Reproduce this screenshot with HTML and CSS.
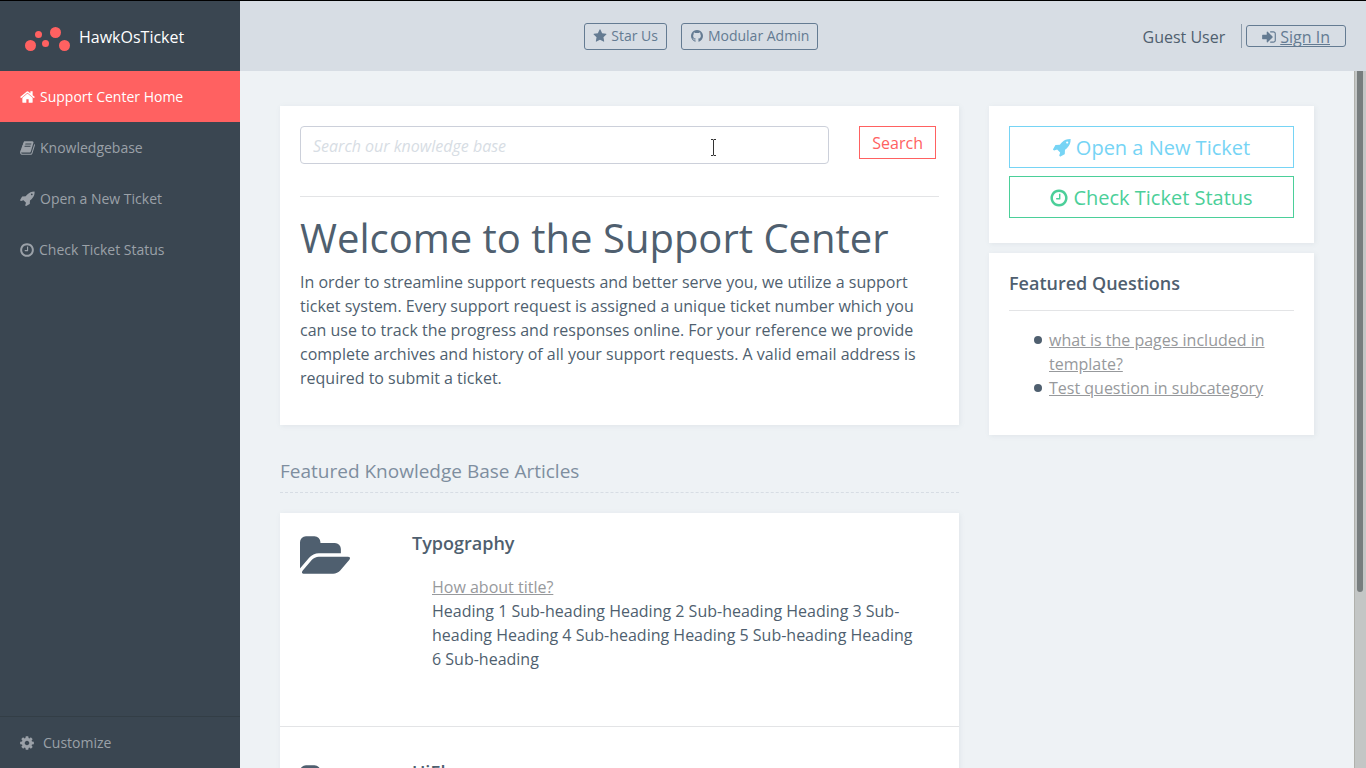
FILE: index.html
```html
<!DOCTYPE html>
<html lang="en">
<head>
<meta charset="utf-8">
<title>HawkOsTicket</title>
<meta name="viewport" content="width=device-width, initial-scale=1">
<link rel="stylesheet" href="styles.css">
</head>
<body>
<svg class="sprite" aria-hidden="true">
  <symbol id="home" viewBox="64 0 1664 1792"><path d="M1472 992v480q0 26-19 45t-45 19h-384v-384h-256v384h-384q-26 0-45-19t-19-45v-480q0-1 .5-3t.5-3l575-474 575 474q1 2 1 6zm223-69l-62 74q-8 9-21 11h-3q-13 0-21-7l-692-577-692 577q-12 8-24 7-13-2-21-11l-62-74q-8-10-7-23.5t11-21.5l719-599q32-26 76-26t76 26l244 204v-195q0-14 9-23t23-9h192q14 0 23 9t9 23v408l219 182q10 8 11 21.5t-7 23.5z"/></symbol>
  <symbol id="book" viewBox="64 0 1664 1792"><path d="M1703 478q40 57 18 129l-275 906q-19 64-76.5 107.5t-122.5 43.5h-923q-77 0-148.5-53.5t-99.5-131.5q-24-67-2-127 0-4 3-27t4-37q1-8-3-21.5t-3-19.5q2-11 8-21t16.5-23.5 16.5-23.5q23-38 45-91.5t30-91.5q3-10 .5-30t-.5-28q3-11 17-28t17-23q21-36 42-92t25-90q1-9-2.5-32t.5-28q4-13 22-30.5t22-22.5q19-26 42.5-84.5t27.5-96.5q1-8-3-25.5t-2-26.5q2-8 9-18t18-23 17-21q8-12 16.5-30.5t15-35 16-36 19.5-32 26.5-23.5 36-11.5 47.5 5.5l-1 3q38-9 51-9h761q74 0 114 56t18 130l-274 906q-36 119-71.5 153.5t-128.5 34.5h-869q-27 0-38 15-11 16-1 43 24 70 144 70h923q29 0 56-15.5t35-41.5l300-987q7-22 5-57 38 15 59 43zm-1064 2q-4 13 2 22.5t20 9.5h608q13 0 25.5-9.5t16.5-22.5l21-64q4-13-2-22.5t-20-9.5h-608q-13 0-25.5 9.5t-16.5 22.5zm-83 256q-4 13 2 22.5t20 9.5h608q13 0 25.5-9.5t16.5-22.5l21-64q4-13-2-22.5t-20-9.5h-608q-13 0-25.5 9.5t-16.5 22.5z"/></symbol>
  <symbol id="rocket" viewBox="32 64 1664 1792"><path d="M1440 448q0-40-28-68t-68-28-68 28-28 68 28 68 68 28 68-28 28-68zm224-288q0 249-75.5 430.5t-253.5 360.5q-81 80-195 176l-20 379q-2 16-16 26l-384 224q-7 4-16 4-12 0-23-9l-64-64q-13-14-8-32l85-276-281-281-276 85q-3 1-9 1-14 0-23-9l-64-64q-17-19-5-39l224-384q10-14 26-16l379-20q96-114 176-195 188-187 358-258t431-71q14 0 24 9.5t10 22.5z"/></symbol>
  <symbol id="clock" viewBox="128 0 1536 1792"><path d="M1024 544v448q0 14-9 23t-23 9h-320q-14 0-23-9t-9-23v-64q0-14 9-23t23-9h224v-352q0-14 9-23t23-9h64q14 0 23 9t9 23zm416 352q0-148-73-273t-198-198-273-73-273 73-198 198-73 273 73 273 198 198 273 73 273-73 198-198 73-273zm224 0q0 209-103 385.5t-279.5 279.5-385.5 103-385.5-103-279.5-279.5-103-385.5 103-385.5 279.5-279.5 385.5-103 385.5 103 279.5 279.5 103 385.5z"/></symbol>
  <symbol id="cog" viewBox="128 0 1536 1792"><path d="M1152 896q0-106-75-181t-181-75-181 75-75 181 75 181 181 75 181-75 75-181zm512-109v222q0 12-8 23t-20 13l-185 28q-19 54-39 91 35 50 107 138 10 12 10 25t-9 23q-27 37-99 108t-94 71q-12 0-26-9l-138-108q-44 23-91 38-16 136-29 186-7 28-36 28h-222q-14 0-24.5-8.5t-11.5-21.5l-28-184q-49-16-90-37l-141 107q-10 9-25 9-14 0-25-11-126-114-165-168-7-10-7-23 0-12 8-23 15-21 51-66.5t54-70.5q-27-50-41-99l-183-27q-13-2-21-12.5t-8-23.5v-222q0-12 8-23t19-13l186-28q14-46 39-92-40-57-107-138-10-12-10-24 0-10 9-23 26-36 98.5-107.5t94.5-71.5q13 0 26 10l138 107q44-23 91-38 16-136 29-186 7-28 36-28h222q14 0 24.5 8.5t11.5 21.5l28 184q49 16 90 37l142-107q9-9 24-9 13 0 25 10 129 119 165 170 7 8 7 22 0 12-8 23-15 21-51 66.5t-54 70.5q26 50 41 98l183 28q13 2 21 12.5t8 23.5z"/></symbol>
  <symbol id="star" viewBox="64 0 1664 1792"><path d="M1728 647q0 22-26 48l-363 354 86 500q1 7 1 20 0 21-10.5 35.5t-30.5 14.5q-19 0-40-12l-449-236-449 236q-22 12-40 12-21 0-31.5-14.5t-10.5-35.5q0-6 2-20l86-500-364-354q-25-27-25-48 0-37 56-46l502-73 225-455q19-41 49-41t49 41l225 455 502 73q56 9 56 46z"/></symbol>
  <symbol id="github" viewBox="128 0 1536 1792"><path d="M896 128q209 0 385.5 103t279.5 279.5 103 385.5q0 251-146.5 451.5t-378.5 277.5q-27 5-40-7t-13-30q0-3 .5-76.5t.5-134.5q0-97-52-142 57-6 102.5-18t94-39 81-66.5 53-105 20.5-150.5q0-119-79-206 37-91-8-204-28-9-81 11t-92 44l-38 24q-93-26-192-26t-192 26q-16-11-42.5-27t-83.5-38.5-85-13.5q-45 113-8 204-79 87-79 206 0 85 20.5 150t52.5 105 80.5 67 94 39 102.5 18q-39 36-49 103-21 10-45 15t-57 5-65.5-21.5-55.5-62.5q-19-32-48.5-52t-49.5-24l-20-3q-21 0-29 4.5t-5 11.5 9 14 13 12l7 5q22 10 43.5 38t31.5 51l10 23q13 38 44 61.5t67 30 69.5 7 55.5-3.5l23-4q0 38 .5 88.5t.5 54.5q0 18-13 30t-40 7q-232-77-378.5-277.5t-146.5-451.5q0-209 103-385.5t279.5-279.5 385.5-103z"/></symbol>
  <symbol id="signin" viewBox="128 0 1536 1792"><path d="M1312 896q0 26-19 45l-544 544q-19 19-45 19t-45-19-19-45v-288h-448q-26 0-45-19t-19-45v-384q0-26 19-45t45-19h448v-288q0-26 19-45t45-19 45 19l544 544q19 19 19 45zm352-352v704q0 119-84.5 203.5t-203.5 84.5h-320q-13 0-22.5-9.5t-9.5-22.5q0-4-1-20t-.5-26.5 3-23.5 10-19.5 20.5-6.5h320q66 0 113-47t47-113v-704q0-66-47-113t-113-47h-312l-11.5-1-11.5-3-8-5.5-7-9-2-13.5q0-4-1-20t-.5-26.5 3-23.5 10-19.5 20.5-6.5h320q119 0 203.5 84.5t84.5 203.5z"/></symbol>
  <symbol id="folder" viewBox="-64 128 1879 1408"><path d="M1815 952q0 31-31 66l-336 396q-43 51-120.5 86.5t-143.5 35.5h-1088q-34 0-60.5-13t-26.5-43q0-31 31-66l336-396q43-51 120.5-86.5t143.5-35.5h1088q34 0 60.5 13t26.5 43zm-343-344v160h-832q-94 0-197 47.5t-164 119.5l-337 396-5 6q0-4-.5-12.5t-.5-12.5v-960q0-92 66-158t158-66h320q92 0 158 66t66 158v32h544q92 0 158 66t66 158z"/></symbol>
</svg>
<div class="app">
  <aside class="sidebar">
    <div class="brand">
      <svg class="logo" viewBox="0 -4 45 28" aria-hidden="true"><circle cx="5.500" cy="18.500" r="5.500"/><circle cx="13.500" cy="7.500" r="3.500"/><circle cx="20.500" cy="16.500" r="3.500"/><circle cx="30.500" cy="5.500" r="5.500"/><circle cx="39.500" cy="18.500" r="5.500"/></svg>
      <span>HawkOsTicket</span>
    </div>
    <nav class="menu">
      <a class="active" href="#"><svg class="icon"><use href="#home"/></svg>Support Center Home</a>
      <a href="#"><svg class="icon"><use href="#book"/></svg>Knowledgebase</a>
      <a href="#"><svg class="icon"><use href="#rocket"/></svg>Open a New Ticket</a>
      <a href="#"><svg class="icon narrow"><use href="#clock"/></svg>Check Ticket Status</a>
    </nav>
    <a class="customize" href="#"><svg class="icon narrow"><use href="#cog"/></svg>Customize</a>
  </aside>
  <div class="page">
    <header class="topbar">
      <div class="links">
        <a class="pill" href="#"><svg class="icon"><use href="#star"/></svg>Star Us</a>
        <a class="pill" href="#"><svg class="icon"><use href="#github"/></svg>Modular Admin</a>
      </div>
      <div class="user">
        <span class="guest">Guest User</span>
        <a class="signin" href="#"><svg class="icon"><use href="#signin"/></svg>Sign In</a>
      </div>
    </header>
    <div class="viewport">
      <main class="content">
        <div class="primary">
          <section class="card">
            <form class="search">
              <input type="text" placeholder="Search our knowledge base" aria-label="Search our knowledge base">
              <button type="button">Search</button>
              <svg class="cursor" viewBox="0 0 7 17" aria-hidden="true"><path d="M1 .5H3L3.500 1L4 .5H6M3.500 1V16M1 16.500H3L3.500 16L4 16.500H6"/></svg>
            </form>
            <hr>
            <h1>Welcome to the Support Center</h1>
            <p>In order to streamline support requests and better serve you, we utilize a support ticket system. Every support request is assigned a unique ticket number which you can use to track the progress and responses online. For your reference we provide complete archives and history of all your support requests. A valid email address is required to submit a ticket.</p>
          </section>
          <h2 class="section-title">Featured Knowledge Base Articles</h2>
          <section class="articles">
            <article class="article">
              <svg class="folder"><use href="#folder"/></svg>
              <div>
                <h3>Typography</h3>
                <div class="entry">
                  <a href="#">How about title?</a>
                  <p>Heading 1 Sub-heading Heading 2 Sub-heading Heading 3 Sub-heading Heading 4 Sub-heading Heading 5 Sub-heading Heading 6 Sub-heading</p>
                </div>
              </div>
            </article>
            <article class="article">
              <svg class="folder"><use href="#folder"/></svg>
              <div><h3>UiEl</h3></div>
            </article>
          </section>
        </div>
        <div class="secondary">
          <section class="card actions">
            <a class="open" href="#"><svg class="icon"><use href="#rocket"/></svg>Open a New Ticket</a>
            <a class="check" href="#"><svg class="icon"><use href="#clock"/></svg>Check Ticket Status</a>
          </section>
          <section class="card questions">
            <h3>Featured Questions</h3>
            <hr>
            <ul>
              <li><a href="#">what is the pages included in template?</a></li>
              <li><a href="#">Test question in subcategory</a></li>
            </ul>
          </section>
        </div>
      </main>
      <div class="scroll-track"><div class="scroll-thumb"></div></div>
    </div>
  </div>
</div>
</body>
</html>
```
FILE: styles.css
```css
* { box-sizing: border-box; }
body {
  margin: 0;
  font: 16px/24px "Open Sans", "Noto Sans", sans-serif;
  color: #4f5f6f;
  background: #eef2f5;
}
a { color: inherit; }
h1, h2, h3, p, ul { margin: 0; }
hr { border: 0; border-top: 1px solid #e3e4e6; margin: 0; }
.sprite { display: none; }
.icon { width: 1em; height: 1em; fill: currentColor; flex: none; }

.app { display: flex; height: 100vh; overflow: hidden; border-top: 1px solid #000; }

.sidebar {
  width: 240px;
  flex: none;
  display: flex;
  flex-direction: column;
  background: #3a4651;
  color: #9ba1a8;
  font-size: 14px;
}
.brand {
  height: 70px;
  padding: 2px 25px 0;
  display: flex;
  align-items: center;
  gap: 9px;
  color: #fff;
  font-size: 16px;
}
.logo { width: 45px; height: 28px; fill: #ff6161; }
.menu a, .customize {
  display: flex;
  align-items: center;
  height: 51px;
  padding: 0 20px;
  gap: 5px;
  text-decoration: none;
}
.sidebar .icon { width: 15px; height: 16px; }
.sidebar .narrow { width: 14px; }
.menu .active { background: #ff6161; color: #fff; }
.customize { margin-top: auto; height: 52px; gap: 9px; border-top: 1px solid #333e46; }

.page { flex: 1; min-width: 0; display: flex; flex-direction: column; }
.topbar {
  height: 70px;
  flex: none;
  padding: 0 20px 0 40px;
  display: flex;
  align-items: center;
  gap: 20px;
  background: #d7dde4;
}
.links { flex: 1; display: flex; justify-content: center; gap: 14px; }
.pill, .signin {
  display: flex;
  align-items: center;
  gap: 4px;
  color: #647b92;
  border: 1px solid #647b92;
  border-radius: 3px;
}
.pill { height: 27px; padding: 0 8px; font-size: 14px; text-decoration: none; }
.user { display: flex; align-items: center; gap: 4px; }
.guest { height: 24px; line-height: 26px; padding-right: 16px; border-right: 1px solid #8d9cab; }
.signin { height: 22px; padding: 2px 15px 0; }
.signin .icon { width: 14px; }

.viewport { flex: 1; min-height: 0; display: flex; overflow: hidden; }
.content {
  flex: 1;
  min-width: 0;
  padding: 35px 40px 0;
  display: grid;
  grid-template-columns: minmax(0, 679fr) minmax(0, 325fr);
  gap: 30px;
  align-items: start;
}
.card, .articles { background: #fff; box-shadow: 1px 1px 5px rgba(126, 142, 159, .12); }
.card { padding: 20px; }
.card > p { margin-bottom: 15px; }

.search { position: relative; display: flex; align-items: flex-start; gap: 30px; margin-bottom: 32px; padding-right: 3px; }
.search input {
  flex: 1;
  min-width: 0;
  height: 38px;
  padding: 2px 12px 0;
  font: inherit;
  border: 1px solid #ccd0da;
  border-radius: 4px;
  background: #fff;
}
.search input::placeholder { color: #d7dde4; font-style: italic; opacity: 1; }
.search button {
  height: 33px;
  padding: 0 12px;
  font: inherit;
  color: #ff6161;
  border: 1px solid #ff6161;
  background: #fff;
}
.cursor { position: absolute; left: 410px; top: 13px; width: 7px; height: 17px; fill: none; stroke: #333; }
h1 { font-size: 40px; line-height: 48px; font-weight: 400; margin: 17px 0 8px; }

.section-title {
  margin: 32px 0 20px;
  padding-bottom: 7px;
  font-size: 19px;
  line-height: 28px;
  font-weight: 400;
  color: #7e8e9f;
  border-bottom: 1px dashed #d7dde4;
}
h3 { font-size: 18px; line-height: 20px; font-weight: 600; }
.article { display: grid; grid-template-columns: 112px 1fr; padding: 20px 20px 55px; }
.article + .article { border-top: 1px solid #e3e4e6; padding-top: 35px; }
.folder { width: 50px; height: 38px; margin-top: 3px; fill: #4f5f6f; }
.entry { padding: 22px 20px 0; }
.entry a, .questions a { color: #97999c; }

.secondary { display: grid; gap: 10px; }
.actions { display: grid; gap: 8px; padding-bottom: 25px; }
.actions a {
  display: flex;
  align-items: center;
  justify-content: center;
  gap: 5px;
  height: 42px;
  padding-top: 2px;
  font-size: 20px;
  text-decoration: none;
  border: 1px solid;
}
.actions .icon { width: 18px; }
.open { color: #76d4f5; }
.check { color: #4bcf99; }
.questions { padding-bottom: 35px; }
.questions hr { margin: 17px 0; }
.questions ul { padding-left: 25px; list-style: none; }
.questions li { display: flex; }
.questions li::before {
  content: "";
  flex: none;
  width: 8px;
  height: 8px;
  margin: 8px 7px 0 0;
  border-radius: 50%;
  background: #4f5f6f;
}

.scroll-track { width: 12px; flex: none; padding: 0 3px 0 2px; border-left: 1px solid #b0b1ac; background: #c3c6c5; }
.scroll-thumb { height: 521px; border-radius: 0 0 3px 3px; background: #777d7e; }
```
